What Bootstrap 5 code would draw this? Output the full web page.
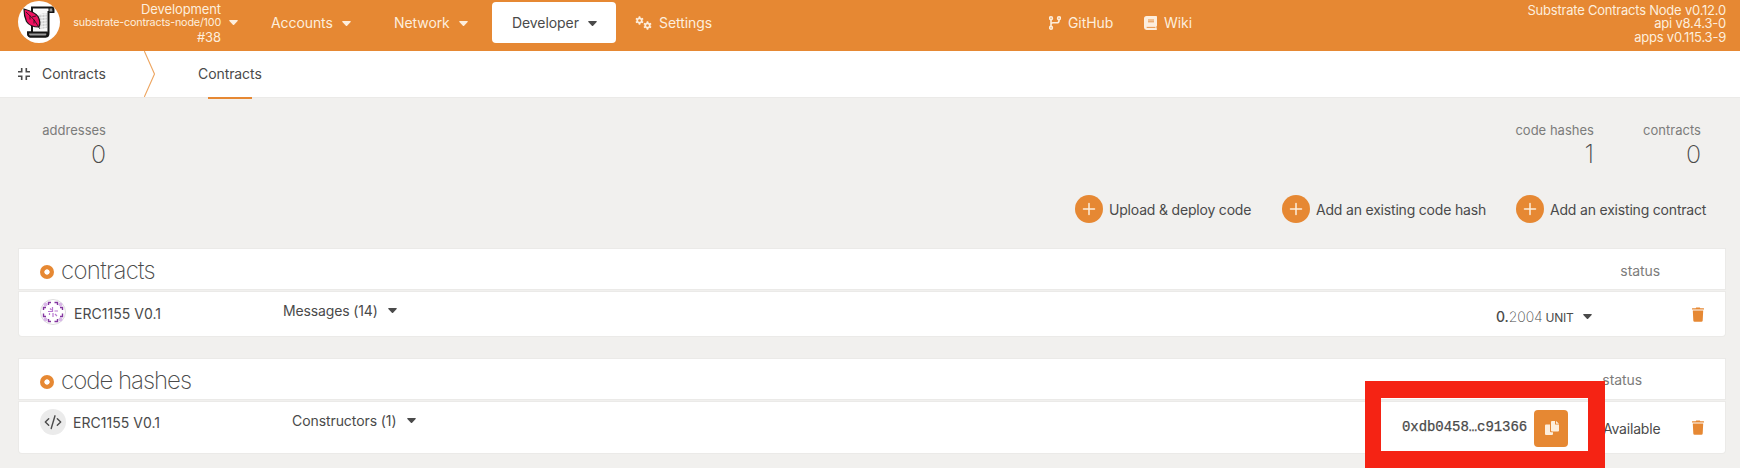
<!DOCTYPE html>
<html lang="en">
<head>
<meta charset="utf-8">
<title>Contracts</title>
<meta name="viewport" content="width=device-width, initial-scale=1">
<link href="https://cdn.jsdelivr.net/npm/bootstrap@5.3.0/dist/css/bootstrap.min.css" rel="stylesheet">
<style>
  :root { --accent: #e68833; --ink: #4a4a4a; }
  body { background: #f1f0ee; color: var(--ink); font-family: Inter, "Liberation Sans", sans-serif; font-size: 14px; line-height: 20px; letter-spacing: -.08px; overflow: hidden; height: 468px; position: relative; }
  svg { display: block; flex: none; }
  .topbar { background: var(--accent); color: #fdeedd; height: 51px; }
  .topbar .logo { margin: 1px 0 0 18px; }
  .chain { width: 161px; font-size: 13px; line-height: 14px; padding-top: 2px; letter-spacing: -.1px; white-space: nowrap; }
  .chain .spec { font-size: 10.8px; letter-spacing: -.2px; line-height: 14px; }
  .menu-item { height: 41px; margin-top: 2px; padding: 4px 0 3px 20px; border-radius: 4px; color: inherit; text-decoration: none; display: flex; align-items: center; white-space: nowrap; flex: none; line-height: 20px; }
  .menu-item.active { background: #fff; color: var(--ink); }
  .menu-item .caret { margin-top: 1px; }
  .caret { width: 9px; height: 5px; fill: currentColor; }
  .versions { font-size: 13px; line-height: 13.5px; padding-top: 3.5px; margin-right: 14px; letter-spacing: -.22px; }
  .tabs { background: #fff; height: 46px; box-shadow: 0 1px 0 #ebeae8; }
  .tab-title { width: 114px; padding-left: 12px; }
  .tab-active { margin-left: 43px; height: 46px; width: 63px; position: relative; }
  .tab-active::after { content: ""; position: absolute; left: 10px; bottom: -2px; width: 44px; height: 2px; background: var(--accent); }
  .summary { padding: 23px 39px 0 0; height: 98px; }
  .stat { color: #7c7c7b; font-size: 13px; text-align: right; letter-spacing: .02px; }
  .stat b { display: block; font-size: 25px; font-weight: 200; line-height: 28px; color: #4a4a4a; }
  .actions { height: 28px; }
  .action { display: flex; align-items: center; flex: none; white-space: nowrap; border: 0; background: none; padding: 0; color: var(--ink); gap: 6px; letter-spacing: -.19px; }
  .action span { padding-top: 2px; }
  .listing { margin: 0 15px 23px 19px; }
  .list-head, .list-line { background: #fff; box-shadow: 0 0 0 1px #ebeae8; }
  .list-head { height: 40px; margin-bottom: 3px; padding-left: 21px; }
  .list-line { height: 44px; border-radius: 0 0 3px 3px; padding-left: 21px; }
  .list-line.tall { height: 51px; }
  .list-title { font-size: 24px; font-weight: 200; letter-spacing: -.7px; margin: 0 0 0 7px; line-height: 30px; }
  .list-title.tight { letter-spacing: -1px; }
  .ring { width: 14px; height: 14px; border-radius: 50%; margin-top: 6px; background: radial-gradient(circle, #fff 2.3px, var(--accent) 3px); }
  .label { color: #7c7c7b; }
  .w-name { width: 87px; white-space: nowrap; letter-spacing: .04px; }
  .unit { font-size: 12px; letter-spacing: -.2px; margin-left: -1px; }
  .hash { font-family: "Liberation Mono", monospace; font-size: 14px; letter-spacing: -.06px; width: 132px; flex: none; -webkit-text-stroke: .25px currentColor; }
  .copy-btn { width: 34px; height: 37px; background: var(--accent); border-radius: 4px; border: 0; padding: 0 0 0 1px; margin-top: 1px; display: grid; place-content: center; flex: none; }
  .callout { position: absolute; left: 1365px; top: 380.5px; width: 240px; height: 87.5px; border: 17px solid #f52314; border-left-width: 16px; pointer-events: none; }
</style>
</head>
<body>
<svg width="0" height="0" class="position-absolute">
  <symbol id="down" viewBox="0 0 9 5"><path d="M.7 0h7.6q.8.2.3.9L5.1 4.7q-.6.5-1.2 0L.4.9Q-.1.2.7 0z"/></symbol>
  <symbol id="trash" viewBox="0 0 12 15"><path fill="#e68833" d="M.4 1.200h3.300L4.200.4h3.600l.5.8h3.300q.4 0 .4.4V2.600H0V1.600q0-.4.4-.4zM.8 3.600h10.400l-.5 10q-.1 1.200-1.300 1.200H2.600q-1.200 0-1.300-1.200z"/></symbol>
  <symbol id="add" viewBox="0 0 28 28"><circle cx="14" cy="14" r="14" fill="#e68833"/><path d="M14 8.500v11M8.500 14h11" stroke="#fdeedd" stroke-width="1.500" stroke-linecap="round"/></symbol>
  <symbol id="gear" viewBox="0 0 10 10"><path fill="none" stroke="currentColor" stroke-width="2" d="M5 2.500a2.500 2.500 0 1 0 .01 0z"/><path stroke="currentColor" stroke-width="1.800" d="M5 .4v1.800M5 7.800v1.800M1 2.700l1.600.9M7.400 6.400l1.600.9M1 7.300l1.600-.9M7.400 3.600l1.600-.9"/></symbol>
</svg>

<header class="topbar d-flex align-items-start">
  <svg class="logo" width="42" height="42" viewBox="0 0 42 42">
    <circle cx="21" cy="21" r="21" fill="#fff"/>
    <path d="M14 6.500h20q1.800.3 1.500 4.500h-5v21q0 3.500-2.500 3.500H12q-2-.3-2-4h4z" fill="#fff" stroke="#151515" stroke-width="2"/>
    <path d="M15 30V9h14v21z" fill="#f8f8f8"/>
    <path d="M10 31.500h19q.8 3.800-1.500 4H12q-2-.4-2-4z" fill="#999" stroke="#151515" stroke-width="1.800"/>
    <path d="M31 7v4h4q.3-4-1.500-4z" fill="#999" stroke="#151515"/>
    <path d="M20 14q5-2 9-2v15l-6 1z" fill="#ccc"/>
    <path d="M20 14l9-1M21 17l8-1M22 20l7-1M23 23l6-1M23 26l6-1M27 12v16M24 13v15" stroke="#fff" stroke-width=".7"/>
    <path d="M6 8q11 3 14 7.500 3 5.500 1 10.500-9 0-12.500-5.500Q6 15 6 8z" fill="#ee1060" stroke="#151515" stroke-width="1.200"/>
    <path d="M8 11q9 7 14 17M12 14.500v4M16 18.500v4M14 16l4-1" stroke="#151515" stroke-width=".8" fill="none"/>
  </svg>
  <div class="chain text-end">
    <div>Development</div>
    <div class="spec">substrate-contracts-node/100</div>
    <div>#38</div>
  </div>
  <svg class="caret ms-2" style="margin-top:20px"><use href="#down"/></svg>
  <nav class="d-flex" style="margin-left:13px">
    <a class="menu-item" style="width:123px"><span style="width:71px">Accounts</span><svg class="caret"><use href="#down"/></svg></a>
    <a class="menu-item" style="width:118px"><span style="width:65px">Network</span><svg class="caret"><use href="#down"/></svg></a>
    <a class="menu-item active" style="width:124px"><span style="width:76px">Developer</span><svg class="caret"><use href="#down"/></svg></a>
    <a class="menu-item" style="width:413px;padding-left:19px">
      <svg width="17" height="15" style="margin-right:7px"><use href="#gear" width="9" height="9"/><use href="#gear" x="8" y="5" width="9" height="9"/></svg>Settings</a>
    <a class="menu-item" style="width:95px">
      <svg width="12" height="14" viewBox="0 0 12 14" fill="none" stroke="currentColor" stroke-width="1.600" style="margin-right:7px"><circle cx="2" cy="2.200" r="1.400"/><circle cx="2" cy="11.800" r="1.400"/><circle cx="10" cy="2.200" r="1.400"/><path d="M2 3.600v6.800M10 3.600v1.200q0 2-2 2H4q-2 0-2 1.500"/></svg>GitHub</a>
    <a class="menu-item">
      <svg width="13" height="14" viewBox="0 0 13 14" style="margin-right:7px"><path d="M2.600 0h9.600q.8 0 .8.800v8.700q0 .5-.5.800v1.900q.5 0 .5.900t-.7.900H2.600Q0 13.800 0 11.400V2.600Q0 0 2.600 0z" fill="currentColor"/><path d="M4 4h6M4 5.800h6M2.700 11.400h8.700" stroke="#e68833" stroke-width=".9"/></svg>Wiki</a>
  </nav>
  <div class="versions ms-auto text-end">
    <div>Substrate Contracts Node v0.12.0</div>
    <div>api v8.4.3-0</div>
    <div>apps v0.115.3-9</div>
  </div>
</header>

<div class="tabs d-flex align-items-center">
  <svg width="12" height="12" viewBox="0 0 12 12" style="margin-left:18px" fill="none" stroke="#4a4a4a" stroke-width="1.600"><path d="M0 3.800h3.700V0M12 3.800H8.300V0M0 8.200h3.700V12M12 8.200H8.300V12"/></svg>
  <div class="tab-title">Contracts</div>
  <svg width="11" height="46" viewBox="0 0 11 46" fill="none" stroke="#eda560" stroke-width="1.100"><path d="M.3 0l10.200 23L.3 46"/></svg>
  <div class="tab-active d-flex align-items-center">Contracts</div>
</div>

<section class="summary d-flex">
  <div class="stat" style="width:106px">addresses<b>0</b></div>
  <div class="stat ms-auto">code hashes<b>1</b></div>
  <div class="stat" style="width:107px">contracts<b>0</b></div>
</section>

<div class="actions d-flex" style="margin:0 0 26px 1075px">
  <button class="action" style="width:207px"><svg width="28" height="28"><use href="#add"/></svg><span>Upload &amp; deploy code</span></button>
  <button class="action" style="width:234px"><svg width="28" height="28"><use href="#add"/></svg><span>Add an existing code hash</span></button>
  <button class="action"><svg width="28" height="28"><use href="#add"/></svg><span>Add an existing contract</span></button>
</div>

<section class="listing">
  <div class="list-head d-flex align-items-center">
    <span class="ring"></span><h1 class="list-title" style="padding-top:4px">contracts</h1>
    <span class="label ms-auto" style="margin-right:65px;padding-top:3px">status</span>
  </div>
  <div class="list-line d-flex align-items-center">
    <svg width="26" height="26" viewBox="0 0 26 26" style="margin-top:-4px">
      <circle cx="13" cy="13" r="12.500" fill="#fff" stroke="#ddd"/>
      <g fill="#d9b8e8"><circle cx="5.500" cy="5.500" r="2"/><circle cx="20.500" cy="5.500" r="2"/><circle cx="5.500" cy="20.500" r="2"/><circle cx="20.500" cy="20.500" r="2"/></g>
      <g fill="none" stroke="#83369f" stroke-width="1.400"><path d="M8.500 6V3.500H11M14.500 3.500h3V6M8.500 20v2.500H11M14.500 22.500h3V20M6 8.500H3.500V11M3.500 14.500v3H6M20 8.500h2.500V11M22.500 14.500v3H20"/></g>
      <path d="M12.500 8v4.500H8M18 12h-3.500M13 14v4M9.500 16v-2M10 9.500l1.500 1.500M15 15l2 2" fill="none" stroke="#b878d0" stroke-width="1.200"/>
    </svg>
    <div class="w-name" style="margin:0 0 0 8px">ERC1155 V0.1</div>
    <div style="margin:-7px 0 0 122px;width:105px;letter-spacing:-.14px">Messages (14)</div>
    <svg class="caret" style="margin-top:-7px"><use href="#down"/></svg>
    <div class="ms-auto d-flex align-items-center" style="padding-top:6px">
      <div style="width:87px"><span class="fw-medium">0.</span><span style="font-weight:200">2004</span> <span class="unit">UNIT</span></div>
      <svg class="caret" style="margin-top:-2px"><use href="#down"/></svg>
    </div>
    <svg width="12" height="15" style="margin:1px 21px 0 100px"><use href="#trash"/></svg>
  </div>
</section>

<section class="listing mb-0">
  <div class="list-head d-flex align-items-center">
    <span class="ring"></span><h1 class="list-title tight" style="padding-top:3px">code hashes</h1>
    <span class="label ms-auto" style="margin-right:83px;padding-top:2px">status</span>
  </div>
  <div class="list-line tall d-flex align-items-center">
    <svg width="26" height="26" viewBox="0 0 26 26" style="margin-top:-11px"><circle cx="13" cy="13" r="13" fill="#ebebeb"/><path d="M8.700 9.800L5.300 13l3.400 3.200M17.300 9.800l3.400 3.200-3.400 3.200M15 6.800L11.200 19.500" fill="none" stroke="#4a4a4a" stroke-width="1.400" stroke-linecap="round" stroke-linejoin="round"/></svg>
    <div class="w-name" style="margin:-10px 0 0 7px">ERC1155 V0.1</div>
    <div style="margin:-14px 0 0 132px;width:115px">Constructors (1)</div>
    <svg class="caret" style="margin-top:-15px"><use href="#down"/></svg>
    <div class="hash ms-auto" style="margin-top:-2px">0xdb0458…c91366</div>
    <button class="copy-btn"><svg width="14" height="14" viewBox="0 0 14 14" fill="#fdeedd"><path d="M1 3.500h4v6.700q0 1 1 1h2V13q0 1-1 1H1q-1 0-1-1V4.500q0-1 1-1z"/><path d="M7 0h3v3.500h4v6q0 1-1 1H7q-1 0-1-1V1q0-1 1-1zM11 0l3 2.700h-3z"/></svg></button>
    <div style="margin:2px 0 0 35px;width:89px;letter-spacing:-.2px">Available</div>
    <svg width="12" height="15" style="margin-right:21px"><use href="#trash"/></svg>
  </div>
</section>
<div class="callout"></div>
<script src="https://cdn.jsdelivr.net/npm/bootstrap@5.3.0/dist/js/bootstrap.bundle.min.js"></script>
</body>
</html>
